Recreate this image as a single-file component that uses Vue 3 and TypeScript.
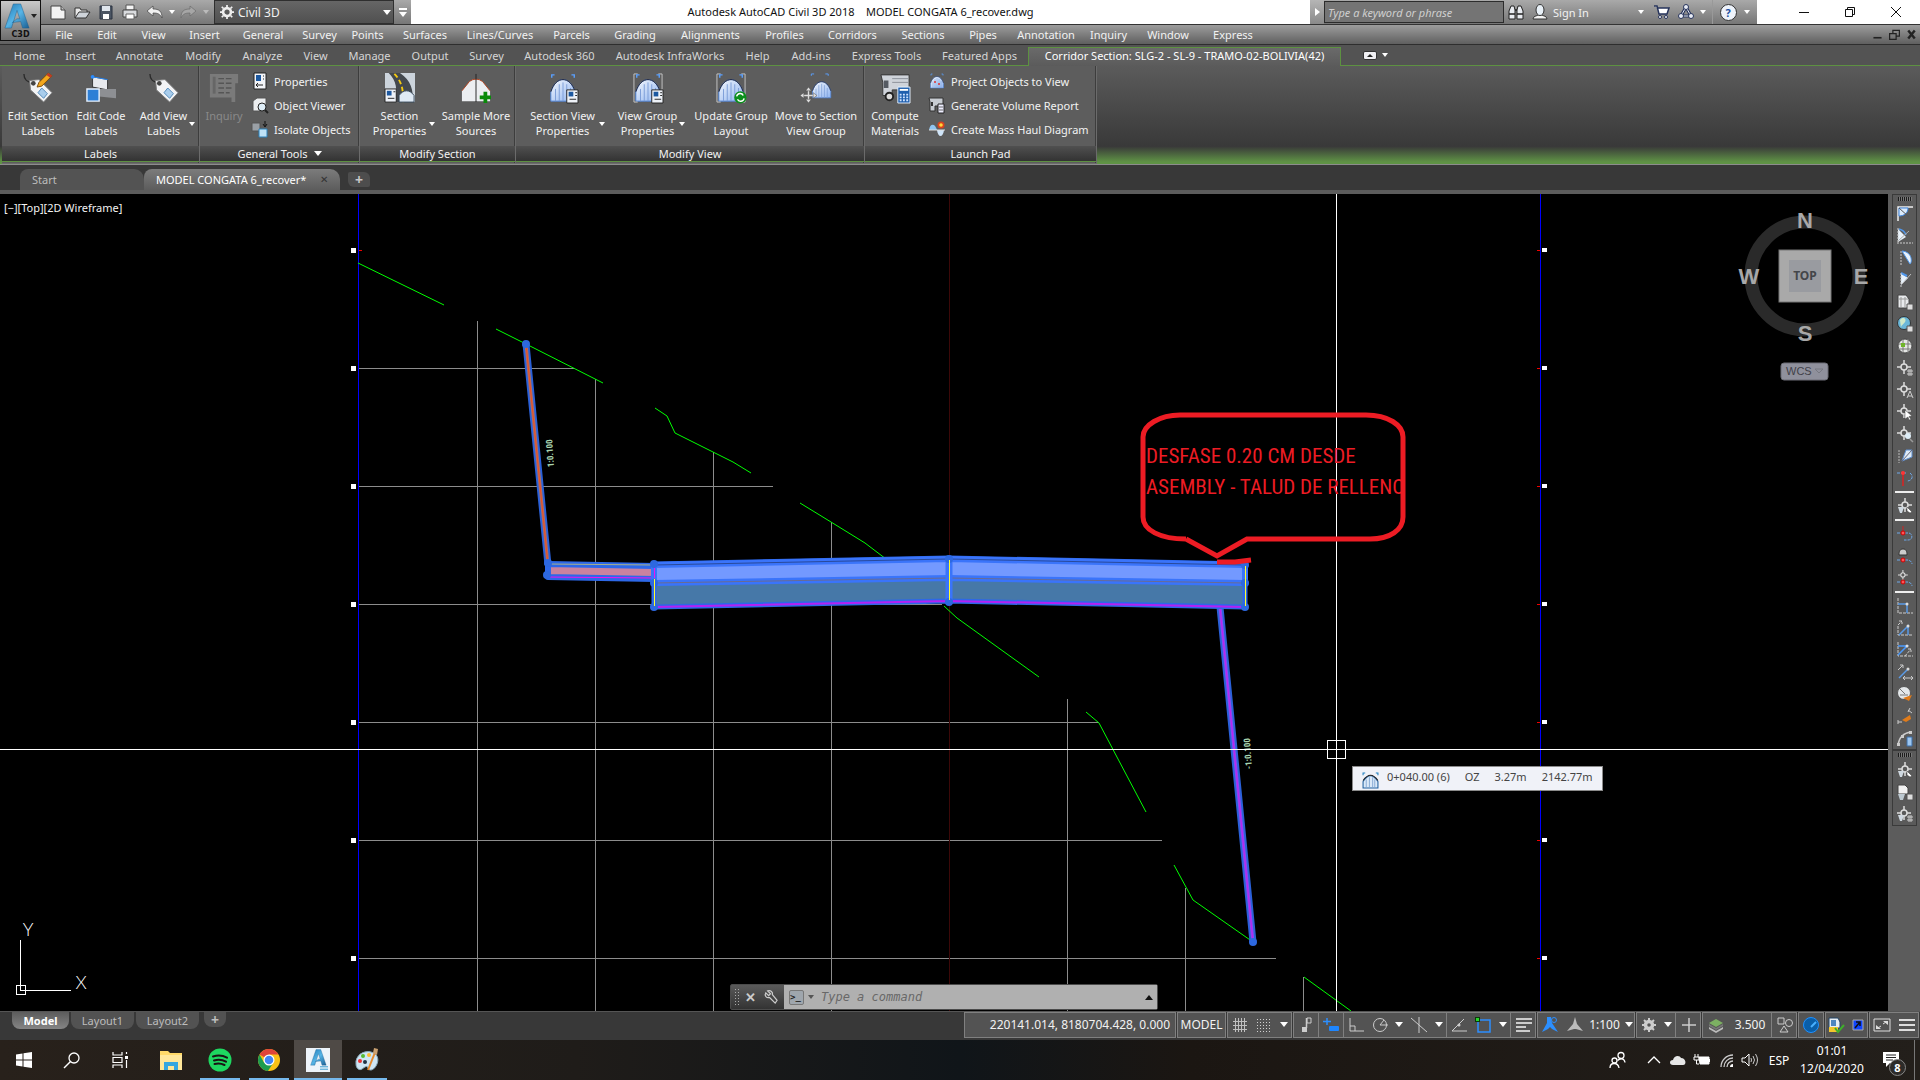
<script setup lang="ts">
import { ref } from 'vue'

interface Sized { text: string; w: number }
interface Big { icon: string; lines: string[]; w: number; caret?: boolean; off?: boolean }
interface Small { icon: string; text: string }
interface Panel { title: string; w: number; big: Big[]; small: Small[]; more?: boolean }
interface Cell { w: number; icon?: string; text?: string; caret?: boolean; line?: boolean; label: string }

const s = (text: string, w: number): Sized => ({ text, w })

const menus: Sized[] = [
  s('File', 42), s('Edit', 44), s('View', 49), s('Insert', 53), s('General', 64), s('Survey', 49), s('Points', 47),
  s('Surfaces', 68), s('Lines/Curves', 82), s('Parcels', 61), s('Grading', 66), s('Alignments', 85), s('Profiles', 63),
  s('Corridors', 73), s('Sections', 68), s('Pipes', 52), s('Annotation', 74), s('Inquiry', 51), s('Window', 68), s('Express', 62),
]
const tabs: Sized[] = [
  s('Home', 53), s('Insert', 49), s('Annotate', 69), s('Modify', 58), s('Analyze', 61), s('View', 45), s('Manage', 63),
  s('Output', 58), s('Survey', 55), s('Autodesk 360', 91), s('Autodesk InfraWorks', 130), s('Help', 45), s('Add-ins', 62),
  s('Express Tools', 89), s('Featured Apps', 97), s('Corridor Section: SLG-2 - SL-9 - TRAMO-02-BOLIVIA(42)', 313),
]
const activeTab = ref(15)

const panels: Panel[] = [
  { title: 'Labels', w: 198, small: [], big: [
    { icon: 'tagEdit', lines: ['Edit Section', 'Labels'], w: 66 },
    { icon: 'codes', lines: ['Edit Code', 'Labels'], w: 60 },
    { icon: 'tag', lines: ['Add View', 'Labels'], w: 68, caret: true } ] },
  { title: 'General Tools', w: 160, more: true, big: [
    { icon: 'inquiry', lines: ['Inquiry'], w: 42, off: true } ], small: [
    { icon: 'props', text: 'Properties' }, { icon: 'viewer', text: 'Object Viewer' }, { icon: 'isolate', text: 'Isolate Objects' } ] },
  { title: 'Modify Section', w: 156, small: [], big: [
    { icon: 'road', lines: ['Section', 'Properties'], w: 76, caret: true },
    { icon: 'sample', lines: ['Sample More', 'Sources'], w: 74 } ] },
  { title: 'Modify View', w: 349, small: [], big: [
    { icon: 'viewProps', lines: ['Section View', 'Properties'], w: 90, caret: true },
    { icon: 'groupProps', lines: ['View Group', 'Properties'], w: 80, caret: true },
    { icon: 'groupUpdate', lines: ['Update Group', 'Layout'], w: 84 },
    { icon: 'groupMove', lines: ['Move to Section', 'View Group'], w: 86 } ] },
  { title: 'Launch Pad', w: 232, big: [
    { icon: 'compute', lines: ['Compute', 'Materials'], w: 54 } ], small: [
    { icon: 'project', text: 'Project Objects to View' }, { icon: 'volume', text: 'Generate Volume Report' },
    { icon: 'haul', text: 'Create Mass Haul Diagram' } ] },
]

const tools: string[][] = [
  ['pieCorner', 'pieLine', 'pieD', 'pieLeft', 'sheet', 'globe', 'grid', 'ptHash', 'ptA', 'ptArrow', 'ptZoom', 'plane', 'redT'],
  ['ptFan'], ['redCurve', 'redBag', 'redPt'],
  ['cornerA', 'cornerB', 'cornerC', 'cornerD', 'protract', 'ortho3', 'arcCalc'],
]
const tools2 = ['ptFan', 'sheetFan', 'fanHash']

const status: Cell[][] = [
  [{ w: 212, text: '220141.014, 8180704.428, 0.000', label: 'Coordinates' }],
  [{ w: 49, text: 'MODEL', label: 'Model space' }],
  [{ w: 25, icon: 'sGrid', label: 'Grid' }, { w: 23, icon: 'sDots', label: 'Snap' }, { w: 17, caret: true, label: 'Snap settings' }],
  [{ w: 25, icon: 'sNote', label: 'Infer' }, { w: 25, icon: 'sDyn', line: true, label: 'Dynamic input' },
    { w: 25, icon: 'sOrtho', line: true, label: 'Ortho' }, { w: 24, icon: 'sPolar', label: 'Polar' }, { w: 14, caret: true, label: 'Polar settings' },
    { w: 25, icon: 'sIso', label: 'Isodraft' }, { w: 15, caret: true, label: 'Isodraft settings' },
    { w: 25, icon: 'sAngle', line: true, label: 'Tracking' }, { w: 24, icon: 'sSquare', label: 'Object snap' }, { w: 15, caret: true, label: 'Object snap settings' },
    { w: 26, icon: 'sLines', line: true, label: 'Lineweight' }],
  [{ w: 25, icon: 'sMan', label: 'Annotation visibility' }, { w: 25, icon: 'sScale', label: 'Auto scale' }, { w: 48, text: '1:100', caret: true, label: 'Annotation scale' }],
  [{ w: 25, icon: 'sGear', label: 'Workspace' }, { w: 14, caret: true, label: 'Workspace list' }, { w: 26, icon: 'sPlus', line: true, label: 'Annotation monitor' }],
  [{ w: 27, icon: 'sLayer', label: 'Level of detail' }, { w: 42, text: '3.500', label: 'Elevation' }, { w: 26, icon: 'sShapes', line: true, label: 'Isolate' }],
  [{ w: 26, icon: 'sCirc', label: 'Graphics performance' }],
  [{ w: 22, icon: 'sDoc', label: 'Units' }, { w: 21, icon: 'sUp', label: 'Shortcuts' }],
  [{ w: 25, icon: 'sFull', label: 'Clean screen' }, { w: 25, icon: 'sMenu', label: 'Customization' }],
]

const apps = [
  { icon: 'folder', label: 'File Explorer', cls: '' }, { icon: 'spotify', label: 'Spotify', cls: 'run' },
  { icon: 'chrome', label: 'Chrome', cls: 'run' }, { icon: 'acad', label: 'Civil 3D', cls: 'run on' },
  { icon: 'paint', label: 'Paint', cls: 'run' },
]

const rows = [250, 368, 486, 604, 722, 840, 958]
const vGrid = [[477, 321], [595, 379], [713, 452], [831, 522], [1067, 699], [1185, 888], [1303, 977]]
const hGrid = [[368, 574], [486, 773], [604, 942], [722, 1099], [840, 1162], [958, 1276]]
const ground = [
  '358,263 444,305', '496,329 526,344 603,383', '655,408 667,416 675,433 713,452 733,462 751,473',
  '800,503 831,522 865,543 886,559', '944,606 957,618 1039,677', '1086,712 1099,723 1146,812',
  '1174,865 1193,900 1253,942', '1304,977 1351,1011',
]
const grips = [[526, 344], [548, 563], [547, 575], [654, 564], [654, 583], [654, 607], [949, 559], [949, 602], [1245, 565], [1245, 583], [1245, 607], [1253, 942]]

const half = '<path d="M3 30V20C6 11 11 7 16 7s10 4 13 13v10z" fill="url(#gb)" stroke="#4b82d8"/><path d="M3 20C6 11 11 7 16 7s10 4 13 13" fill="none" stroke="#223"/><path d="M8 17v13M12 12v18M16 10v20M20 12v18M24 16v14" stroke="#7b9cd6"/>'
const brackets = '<path d="M5 1H1V31H5M27 1h4V31h-4" fill="none" stroke="#c8c8c8"/>'
const corners = '<path d="M4 5V2h3M28 5V2h-3" fill="none" stroke="#5aa0ff" stroke-width="1.5"/>'
const card = '<g transform="translate(20 18)"><path d="M0 0h12v14H0z" fill="#eef2f8" stroke="#222"/><path d="M2 2h5v5H2z" fill="#1c58a0"/><path d="M9 3h2M9 6h2M3 10h7" stroke="#222"/></g>'
const tagBody = '<path d="M1 1c0 6 4 9 9 9" fill="none" stroke="#2b2b2b" stroke-width="1.5"/><path d="M7 8l10-1 14 14-9 10L8 18z" fill="#f2f3f5" stroke="#777"/><circle cx="11" cy="11" r="2.500" fill="#444"/><path d="M20 16l6 6-4 5-6-6z" fill="#a9cdec" stroke="#4e86b8"/>'
const target = '<circle cx="7" cy="7" r="3" fill="none" stroke="#ddd" stroke-width="1.500"/><path d="M7 0v4M7 10v4M0 7h4M10 7h4" stroke="#ddd" stroke-width="1.500"/>'
const fan = '<path d="M1 9h6l-2 6H3z" fill="#cfd8e0"/>'
const hash = '<path d="M10 11h6M10 14h6M12 9v7M14 9v7" stroke="#ccc"/>'
const aMark = '<path d="M1 27L10 1h8l9 26h-7l-2-7-9 1 5-4h3L14 8 8 27z" fill="url(#al)" stroke="#1d5c8a" stroke-width=".5"/>'

const art: Record<string, string> = {
  tagEdit: tagBody + '<path d="M15 15l2-5L27 0l4 3-11 11z" fill="#f5a81c" stroke="#7a4a08"/><path d="M27 0l4 3-2 2-4-3z" fill="#c0392b"/>',
  tag: tagBody,
  codes: '<path d="M7 4l16 3v11L7 15z" fill="#e8eaee" stroke="#333"/><path d="M14 17h18v10l-18-2z" fill="#8d8f93"/><path d="M7 4l16 3" stroke="#2a8cff"/><circle cx="7" cy="4" r="2" fill="#2a8cff"/><path d="M1 17h13v13H1z" fill="#2d7fd6" stroke="#e8f2ff" stroke-width="1.500"/>',
  inquiry: '<path d="M1 1h30v10h-3v20h-4v-5H1z" fill="#7a7a7a"/><path d="M4 4h3v18H4z" fill="#666"/><path d="M10 6h6M18 6h6M10 11h6M18 11h6M10 16h6M18 16h6M10 21h6M18 21h4" stroke="#555" stroke-width="1.500"/>',
  road: '<path d="M0 0h32v31H0z" fill="#ccd4dc"/><path d="M4 0h12c12 8 14 18 14 31H10C14 18 12 8 4 0z" fill="#43484e"/><path d="M10 1c8 8 10 18 9 30" stroke="#f2c811" stroke-width="2" stroke-dasharray="5 3" fill="none"/><path d="M15 31V24c2-3 5-5 8-5s6 2 8 5v7z" fill="#dfeaf5" stroke="#345"/><path d="M0 17h12v14H0z" fill="#eef2f8" stroke="#222"/><path d="M2 19h5v5H2z" fill="#1c58a0"/><path d="M9 20h2M3 27h7" stroke="#222"/>',
  sample: '<path d="M1 30V19L9 9q7-5 14 0l8 10v11z" fill="#eceef1"/><path d="M1 19L9 9q7-5 14 0l8 10" fill="none" stroke="#b1401c"/><path d="M16 1v30" stroke="#222"/><path d="M26 20v12M20 26h12" stroke="#0a8a0a" stroke-width="4"/>',
  viewProps: half + corners + card,
  groupProps: half + brackets + corners + card,
  groupUpdate: half + brackets + corners + '<circle cx="26" cy="26" r="6.500" fill="#0c8f1c"/><path d="M22 25c1-4 6-4 7-1M30 27c-1 4-6 4-7 1" fill="none" stroke="#fff" stroke-width="1.500"/>',
  groupMove: '<g transform="translate(10 4) scale(.75)">' + half + '</g><path d="M11 3V1h3M29 3V1h-3" fill="none" stroke="#5aa0ff"/><path d="M8 16v15M0 24h16" stroke="#ddd" stroke-width="1.500"/><path d="M5 19l3-4 3 4zM5 28l3 4 3-4zM3 21l-4 3 4 3zM13 21l4 3-4 3z" fill="#ddd" stroke="#444" stroke-width=".5"/>',
  compute: '<path d="M1 2h30v16H13v6H3V10z" fill="#cfd3da" stroke="#333"/><path d="M13 6h17M13 10h17" stroke="#8a8f98"/><path d="M4 8h5v8H4z" fill="#555a62"/><circle cx="10" cy="25" r="4" fill="#ddd" stroke="#222" stroke-width="2"/><path d="M19 15h13v17H19z" fill="#1f5fae" stroke="#e8f2ff"/><path d="M21 18h9" stroke="#fff" stroke-width="2"/><path d="M21 23h9M21 26h9M21 29h9" stroke="#cfe3ff" stroke-dasharray="2 1.500" stroke-width="2"/>',
  props: '<path d="M2 0h12v16H2z" fill="#f2f4f8" stroke="#222"/><path d="M4 2h5v6H4z" fill="#1c58a0"/><path d="M11 3h1M11 6h1M4 12h7M4 12l2-2M4 12l2 2" stroke="#222"/>',
  viewer: '<path d="M1 4l4-3h9v9l-3 4H1z" fill="#eceef0" stroke="#555"/><circle cx="10" cy="10" r="4" fill="#dfeef8" stroke="#222"/><path d="M13 13l3 3" stroke="#222" stroke-width="2"/>',
  isolate: '<path d="M0 2h8v8H0z" fill="#9aa0a6" stroke="#555"/><path d="M7 8h8v8H7z" fill="#bfe2f7" stroke="#2c83bd"/><path d="M13 0v5M11 3l2 3 2-3" stroke="#111" fill="none"/>',
  project: '<g transform="scale(.5)">' + half + corners + '</g><circle cx="6" cy="9" r="1" fill="#e03030"/><circle cx="10" cy="11" r="1" fill="#e03030"/>',
  volume: '<path d="M0 1h14v8H6v5H1V5z" fill="#c8ccd2" stroke="#333"/><path d="M2 5h2v4H2z" fill="#333"/><path d="M9 7h6v9H9z" fill="#eef" stroke="#222"/><path d="M10 10h4M10 13h4" stroke="#666"/>',
  haul: '<path d="M0 9c1-7 6-7 8 0z" fill="#8fc4f0"/><path d="M8 9c1 8 6 8 7 0z" fill="#cfe4f8"/><path d="M0 9h16" stroke="#ddd"/><circle cx="12" cy="4" r="3.500" fill="#d8431f"/><circle cx="12" cy="4" r="1.800" fill="#ffd83a"/>',
  new: '<path d="M1 2h10l4 4v9H1z" fill="#f3f3f3" stroke="#444"/><path d="M11 2v4h4" fill="#bbb" stroke="#444"/>',
  open: '<path d="M1 14V4h5l1 2h6v3" fill="#e8e8e8" stroke="#333"/><path d="M1 14l4-6h11l-4 6z" fill="#cfd4da" stroke="#333"/>',
  save: '<path d="M2 2h12v13H2z" fill="#4b5563" stroke="#2b3340"/><path d="M4 2h8v5H4z" fill="#dfe5ec"/><path d="M5 10h6v5H5z" fill="#fff"/>',
  print: '<path d="M4 1h8v5H4z" fill="#f5f5f5" stroke="#555"/><path d="M1 6h14v7H1z" fill="#d9dbde" stroke="#444"/><path d="M4 10h8v5H4z" fill="#fff" stroke="#666"/>',
  undo: '<path d="M1 7l6-5v3c6 0 9 2 9 9-2-4-4-5-9-5v3z" fill="#f0f0f0" stroke="#444" stroke-width=".7"/>',
  redo: '<path d="M15 7l-6-5v3c-6 0-9 2-9 9 2-4 4-5 9-5v3z" fill="#a6a6a6" stroke="#6c6c6c" stroke-width=".7"/>',
  gear: '<circle cx="8" cy="8" r="4.500" fill="none" stroke="#eee" stroke-width="3"/><path d="M8 0v3M8 13v3M0 8h3M13 8h3M2 2l2 2M12 12l2 2M14 2l-2 2M2 14l2-2" stroke="#eee" stroke-width="2"/>',
  bino: '<path d="M1 15V7l2-5h3l1 4v9zM9 15V6l1-4h3l2 5v8z" fill="#e9ecf1" stroke="#222"/><path d="M1 10h6M9 10h6M7 6h2" stroke="#222" stroke-width="1.500"/>',
  user: '<path d="M1 15c0-3 4-3 5-4h4c1 1 5 1 5 4z" fill="#f3f3f3" stroke="#333"/><ellipse cx="8" cy="6" rx="4" ry="5.500" fill="#e8f0f7" stroke="#333"/>',
  cart: '<path d="M0 2h3l2 8h8l2-6H4" fill="#fff" stroke="#27345c" stroke-width="1.500"/><circle cx="6" cy="13" r="1.500" fill="#fff" stroke="#27345c"/><circle cx="12" cy="13" r="1.500" fill="#fff" stroke="#27345c"/>',
  tri: '<path d="M8 3l5 9H3z" fill="none" stroke="#27345c" stroke-width="3" stroke-linejoin="round"/><path d="M8 3l5 9H3z" fill="none" stroke="#e8ecf5" stroke-linejoin="round"/><g fill="#e8ecf5" stroke="#27345c"><circle cx="8" cy="3" r="2.500"/><circle cx="3" cy="12" r="2.500"/><circle cx="13" cy="12" r="2.500"/></g>',
  winMin: '<path d="M3 8.500h10" stroke="#111"/>',
  winMax: '<path d="M3.500 5.500h7v7h-7zM5.500 5v-1.500h7v7H11" fill="none" stroke="#111"/>',
  winX: '<path d="M3 3l10 10M13 3L3 13" stroke="#111"/>',
  mMin: '<path d="M3 12h10" stroke="#222" stroke-width="2"/>',
  mMax: '<path d="M2 7h8v7H2zM6 7V3h8v7h-4" fill="none" stroke="#222" stroke-width="1.500"/>',
  mX: '<path d="M4 3l8 10M12 3L4 13" stroke="#222" stroke-width="3"/>',
  wrench: '<path d="M3 3l3 3 2-2-3-3c3-1 6 1 5 4l5 6-2 3-6-6C4 9 1 6 3 3z" fill="none" stroke="#ccc" stroke-width="1.300"/>',
  section: '<path d="M1 15V9q7-11 14 0v6z" fill="#dbe9f8" stroke="#2060a0"/><path d="M1 8q7-10 14 0" fill="none" stroke="#222"/><path d="M4 7v7M7 5v9M10 5v9M12 7v7" stroke="#8fb0d8"/><path d="M1 3V1h2M15 3V1h-2" fill="none" stroke="#2080c0"/>',
  pieCorner: '<path d="M1 15V1h15" fill="none" stroke="#eee" stroke-width="1.500"/><path d="M2 2h9c0 5-4 8-9 8z" fill="#dcebfb" stroke="#3f86e0"/><path d="M2 2l10 9" stroke="#555"/>',
  pieLine: '<path d="M1 1l8 8-8 5z" fill="#e8f2fb"/><path d="M2 1c4 1 6 3 7 6" fill="none" stroke="#4f96ea" stroke-width="1.500"/><path d="M12 3L1 13" stroke="#aaa"/><path d="M0 15h16M1 0v14" stroke="#ccc" stroke-dasharray="2 1"/>',
  pieD: '<path d="M5 1c11 1 10 12 8 13z" fill="#e8f2fb" stroke="#4f96ea"/><path d="M4 1v14" stroke="#ccc" stroke-dasharray="2 1"/>',
  pieLeft: '<path d="M4 1l7 5-7 7z" fill="#e8f2fb"/><path d="M4 1l6 3" stroke="#4f96ea" stroke-width="2"/><path d="M14 2L5 12" stroke="#bbb"/><path d="M4 1v15" stroke="#ccc" stroke-dasharray="2 1"/>',
  sheet: '<path d="M1 1h8l3 4v9H1z" fill="#e8eaec" stroke="#444"/><path d="M4 3v10M8 3v10M2 5h9" stroke="#999"/><path d="M10 10h6v6h-6z" fill="#ddd" stroke="#555"/>',
  globe: '<circle cx="7" cy="7" r="6.500" fill="#6bb7d8" stroke="#333"/><path d="M3 4c3-4 7-1 5 2S4 9 4 12z" fill="#cfe9c8"/><path d="M10 10h6v6h-6z" fill="#ddd" stroke="#555"/>',
  grid: '<circle cx="8" cy="8" r="7" fill="#e4e6e4" stroke="#444"/><path d="M1 6h14M1 11h14M6 1v14M11 1v14" stroke="#777"/><path d="M4 5h4v4H4z" fill="#6fb52a"/>',
  ptHash: target + hash,
  ptA: target + '<path d="M10 16l3-7 3 7M11 14h4" fill="none" stroke="#ccc"/>',
  ptArrow: target + '<path d="M8 6l7 6-3 .5 2 3-2 .5-1-3-3 2z" fill="#fff" stroke="#444" stroke-width=".5"/>',
  ptZoom: target + '<circle cx="11" cy="10" r="3" fill="#dcebf5"/><path d="M13 13l3 3" stroke="#999" stroke-width="1.500"/>',
  plane: '<path d="M2 2v13" stroke="#bbb" stroke-dasharray="2 1"/><path d="M15 2v7L5 13 9 2z" fill="#dfeaf5" stroke="#5f8fd0"/><path d="M15 2L5 13" stroke="#667"/>',
  redT: '<path d="M0 3h6M6 3h3M13 3c4 3 2 8-3 8" stroke="#6fa8e8" fill="none" stroke-dasharray="3 1"/><path d="M6 3v13" stroke="#d22" stroke-width="1.500"/><circle cx="6" cy="3" r="2" fill="#f33"/>',
  ptFan: '<g transform="translate(1 0)">' + target + '</g>' + fan + '<path d="M10 9l5 5-2 1-3-2z" fill="#fff" stroke="#333" stroke-width=".5"/>',
  redCurve: '<path d="M0 7h12c4 1 4 7-1 7H7" stroke="#6fa8e8" fill="none" stroke-dasharray="3 1"/><path d="M6 0v6" stroke="#c22"/><circle cx="6" cy="7" r="2" fill="#f55" stroke="#c00"/>',
  redBag: '<path d="M2 7c0-4 1-6 4-6s4 2 4 6z" fill="#ccc" stroke="#333"/><path d="M0 12h10c3 0 5 2 5 4" stroke="#6fa8e8" fill="none" stroke-dasharray="3 1"/><circle cx="6" cy="12" r="2" fill="#f55" stroke="#c00"/>',
  redPt: '<g transform="translate(1 0) scale(.7)">' + target + '</g><path d="M0 12h10c3 0 5 2 5 4" stroke="#6fa8e8" fill="none" stroke-dasharray="3 1"/><circle cx="6" cy="12" r="2" fill="#f55" stroke="#c00"/>',
  cornerA: '<path d="M1 0v15h15" fill="none" stroke="#ccc" stroke-dasharray="3 1"/><path d="M1 6h9v9" fill="none" stroke="#5a9be8" stroke-width="1.500"/><circle cx="10" cy="6" r="1.500" fill="#ddd"/>',
  cornerB: '<path d="M1 5l4-4M2 1h3v3M1 6v9h15" fill="none" stroke="#ccc" stroke-dasharray="3 1"/><path d="M2 15l9-9v9" fill="none" stroke="#5a9be8" stroke-width="1.500"/><circle cx="11" cy="6" r="1.500" fill="#ddd"/>',
  cornerC: '<path d="M1 0v14h15M8 14l6-7M11 7h3v3" fill="none" stroke="#ccc" stroke-dasharray="3 1"/><path d="M1 4h9L1 13" fill="none" stroke="#4a9bff" stroke-width="1.500"/><circle cx="10" cy="4" r="1.500" fill="#ddd"/>',
  cornerD: '<path d="M1 6l5-5M3 1h3v3M6 14h10M8 12l-2 2 2 2M14 12l2 2-2 2" fill="none" stroke="#ccc"/><path d="M2 14l9-9" stroke="#5a9be8" stroke-width="1.500"/><circle cx="11" cy="5" r="1.500" fill="#ddd"/>',
  protract: '<circle cx="7" cy="7" r="6.500" fill="#e4e8ea" stroke="#555"/><path d="M3 3l5 5M3 9h8" stroke="#777"/><path d="M6 12l9-3-3 6z" fill="#e07b1a"/>',
  ortho3: '<path d="M1 14h4M1 12v4M11 2l4 3M13 0l-2 4" stroke="#ccc"/><path d="M5 12l8-5 1 4-5 3z" fill="#e07b1a"/>',
  arcCalc: '<path d="M1 15C2 8 6 3 14 2" fill="none" stroke="#ccc" stroke-width="1.500"/><path d="M0 13h3v3H0zM4 5h3v3H4zM12 1h3v3h-3z" fill="#ccc"/><path d="M10 7h5v9h-5z" fill="#9cc6f0" stroke="#3c6ea8"/>',
  sheetFan: '<path d="M1 1h7l3 3v6H1z" fill="#f0f0f0" stroke="#444"/><path d="M1 10h7l-2 6H3z" fill="#bcc8d0"/><path d="M10 10h6v6h-6z" fill="#ddd" stroke="#555"/>',
  fanHash: target + fan + hash,
  sGrid: '<path d="M3.500 1v14M6.500 1v14M9.500 1v14M12.500 1v14M1 4.500h14M1 8.500h14M1 12.500h14" stroke="#c0c0c0"/>',
  sDots: '<path d="M1 2.500h14M1 5.500h14M1 8.500h14M1 11.500h14M1 14.500h14" stroke="#d0d0d0" stroke-dasharray="1 2"/>',
  sNote: '<path d="M9 1h4v5H9z" fill="none" stroke="#ccc"/><path d="M8.500 1v10" stroke="#ccc" stroke-width="1.500"/><path d="M4 10h5v5H4z" fill="#ccc"/>',
  sDyn: '<path d="M4 1v7M0 4.500h8" stroke="#2c8fff" stroke-width="1.500"/><rect x="6" y="9" width="10" height="5" rx="1" fill="#1e86ff"/>',
  sOrtho: '<path d="M2 1v13h14M2 9h5v5" fill="none" stroke="#ccc"/>',
  sPolar: '<circle cx="8" cy="8" r="6.500" fill="none" stroke="#ccc"/><path d="M8 8h8M8 8l4-5" stroke="#ccc"/>',
  sIso: '<path d="M8 0v16M0 1l16 14" stroke="#ccc"/>',
  sAngle: '<path d="M16 14H1L13 2" fill="none" stroke="#ccc"/><circle cx="8" cy="8" r="1.500" fill="#ccc"/>',
  sSquare: '<path d="M3 3h12v12H3z" fill="none" stroke="#2c8fff" stroke-width="1.500"/><path d="M0 0h5v5H0z" fill="#0a3a0a"/><path d="M1 1h3v3H1z" fill="#2bd42b"/>',
  sLines: '<path d="M0 2h16M0 6h16M0 10h10M0 14h14" stroke="#ccc" stroke-width="2"/>',
  sMan: '<path d="M5 0h4l1 6 6 9-6-3-2-2-2 2-6 3 5-9z" fill="#2c8fff"/><circle cx="12" cy="3" r="2.500" fill="#535353" stroke="#2c8fff"/>',
  sScale: '<path d="M8 0l2 7 6 7-7-2H7l-7 2 6-7z" fill="#bbb"/>',
  sGear: '<circle cx="8" cy="8" r="3.500" fill="none" stroke="#ccc" stroke-width="3.500"/><path d="M8 1v2M8 13v2M1 8h2M13 8h2M3 3l2 2M11 11l2 2M13 3l-2 2M3 13l2-2" stroke="#ccc" stroke-width="2"/>',
  sPlus: '<path d="M8 1v14M1 8h14" stroke="#ccc" stroke-width="1.500"/>',
  sLayer: '<path d="M1 10l7 4 7-4v2l-7 4-7-4z" fill="#bbb"/><path d="M1 7l7 4 7-4v2l-7 4-7-4z" fill="#777"/><path d="M8 2l7 4-7 4-7-4z" fill="#7cb062"/>',
  sShapes: '<path d="M1 1h6v6H1zM7 9l4 6H3z" fill="none" stroke="#ccc"/><circle cx="12" cy="6" r="3.500" fill="none" stroke="#ccc"/>',
  sCirc: '<circle cx="8" cy="8" r="7.500" fill="#0a5ea8" stroke="#1e90ff"/><path d="M8 10l5-5" stroke="#49b0ff" stroke-width="2"/>',
  sDoc: '<path d="M1 1h9l2 4v6H1z" fill="#e8eef4" stroke="#246"/><path d="M3 3h5v6H3z" fill="#4f86c0"/><path d="M1 10h9v5H1z" fill="#f2c62c"/><path d="M7 11l3 4 6-7" fill="none" stroke="#3fae2a" stroke-width="2"/>',
  sUp: '<path d="M3 3h10v10H3z" fill="#1044ff" stroke="#aaa"/><path d="M5 11l5-6M6 5h4v4" fill="none" stroke="#111" stroke-width="1.500"/>',
  sFull: '<path d="M0 2h16v12H0z" fill="none" stroke="#ddd"/><path d="M9 4h5v4zM2 8v4h5z" fill="#ddd"/><path d="M9 7l3-2M4 11l3-2" stroke="#ddd"/>',
  sMenu: '<path d="M0 3h16M0 8h16M0 13h16" stroke="#ddd" stroke-width="2"/>',
  win: '<path d="M0 2.500l6.500-1v6H0zM7.500 1.300L16 0v7.500H7.500zM0 8.500h6.500v6L0 13.500zM7.500 8.500H16V16l-8.500-1.300z" fill="#fff"/>',
  search: '<circle cx="10" cy="6" r="5" fill="none" stroke="#fff" stroke-width="1.300"/><path d="M6.500 9.500L0 16" stroke="#fff" stroke-width="1.500"/>',
  task: '<path d="M1 0v3h9V0M1 5.500h9v5H1zM1 16v-3h9v3M14.500 0v2M14.500 8v8" fill="none" stroke="#fff" stroke-width="1.200"/><path d="M13 4h3v3h-3z" fill="#fff"/>',
  folder: '<path d="M1 3h8l2 2h12v17H1z" fill="#ffd968"/><path d="M1 7h22v15H1z" fill="#ffe79a"/><path d="M5 22v-8h14v8h-4v-4H9v4z" fill="#35a7e0"/>',
  spotify: '<circle cx="12" cy="12" r="11.500" fill="#1ed760"/><path d="M5 8.500c5-1.500 10-1 14 1.200M6 12.500c4-1.200 8.500-.8 12 1.200M6.500 16c3.500-1 7-.6 10 1" fill="none" stroke="#191414" stroke-width="2" stroke-linecap="round"/>',
  chrome: '<circle cx="12" cy="12" r="11" fill="#fbc116"/><path d="M12 12L2.500 6.500A11 11 0 0 1 21.500 6.500H12z" fill="#e0443a"/><path d="M2.500 6.500A11 11 0 0 0 11 23l5.500-8.500H7z" fill="#1c9c50"/><circle cx="12" cy="12" r="5.500" fill="#fff"/><circle cx="12" cy="12" r="4.300" fill="#4285f4"/>',
  acad: '<path d="M0 0h24v24H0z" fill="#eef4fa"/><g transform="translate(4 1) scale(.6)">' + aMark + '</g><path d="M14 18h8v4h-8z" fill="#6fb6dc"/><path d="M14 20h8" stroke="#fff"/>',
  paint: '<path d="M1 16C0 8 8 2 16 4c8 2 8 9 5 14-3 5-7 5-8 2s-3-1-6 1-6-1-6-5z" fill="#cfe6f5" stroke="#8ab"/><circle cx="5" cy="13" r="2" fill="#e33"/><circle cx="8" cy="8" r="2" fill="#5b3"/><circle cx="14" cy="7" r="2" fill="#fb3"/><circle cx="10" cy="14" r="2" fill="#234"/><path d="M21 2l-8 20" stroke="#e58a2e" stroke-width="2"/><path d="M19 0l4 1-1 6-4-2z" fill="#c9a070"/>',
  people: '<circle cx="11" cy="3.500" r="3" fill="none" stroke="#fff" stroke-width="1.300"/><circle cx="4.500" cy="8.500" r="2.500" fill="none" stroke="#fff" stroke-width="1.300"/><path d="M7.500 8.500c3-3 7-2 7.500 2M0 16c0-6 8-6 9 0" fill="none" stroke="#fff" stroke-width="1.300"/>',
  up: '<path d="M2 11l6-6 6 6" fill="none" stroke="#fff" stroke-width="1.300"/>',
  cloud: '<path d="M3 13c-4 0-4-5 0-5 1-5 7-5 8-2 5 0 6 7 2 7z" fill="#e6e6e6"/>',
  batt: '<path d="M5 5h10v7H6z" fill="#fff" stroke="#fff"/><path d="M15.500 7v3M1 2v3M4 2v3M0 5h5v3H0zM2.500 8v4H5" fill="none" stroke="#fff"/>',
  wifi: '<path d="M3 15A12 12 0 0 1 15 3M6 15a9 9 0 0 1 9-9M9 15a6 6 0 0 1 6-6" fill="none" stroke="#ccc" stroke-width="1.300"/><path d="M12 15a3 3 0 0 1 3-3v3z" fill="#fff"/>',
  vol: '<path d="M0 6h3l4-4v12l-4-4H0z" fill="none" stroke="#fff"/><path d="M9 6q1 2 0 4M11 4q3 4 0 8M13.500 2q4 6 0 12" fill="none" stroke="#ccc"/>',
  note: '<path d="M0 0h16v11H7l-4 4v-4H0z" fill="#fff"/><path d="M3 3h10M3 5.500h10M3 8h7" stroke="#222"/>',
}

const workspace = ref('Civil 3D')
const keyword = ref('')
const command = ref('')
</script>

<template>
  <div class="app">
    <svg class="defs" width="0" height="0" aria-hidden="true">
      <defs>
        <linearGradient id="gb" x1="0" y1="0" x2="1" y2="1"><stop offset="0" stop-color="#f4f7fc" /><stop offset="1" stop-color="#8fb4f0" /></linearGradient>
        <linearGradient id="al" x1="0" y1="0" x2="1" y2="1"><stop offset="0" stop-color="#1f78b4" /><stop offset=".5" stop-color="#56b4e6" /><stop offset="1" stop-color="#1b5f93" /></linearGradient>
      </defs>
    </svg>

    <header class="top">
      <button class="appbtn" aria-label="Application menu">
        <svg viewBox="0 0 28 28" width="26" height="28" v-html="aMark"></svg>
        <i class="caret dark"></i>
        <span>C3D</span>
      </button>
      <div class="title">
        <div class="qat">
          <button v-for="n in ['new', 'open', 'save', 'print', 'undo']" :key="n" :aria-label="n"><svg viewBox="0 0 16 16" width="16" height="16" v-html="art[n]"></svg></button>
          <button class="thin" aria-label="Undo list"><i class="caret"></i></button>
          <button aria-label="redo"><svg viewBox="0 0 16 16" width="16" height="16" v-html="art.redo"></svg></button>
          <button class="thin" aria-label="Redo list"><i class="caret dim"></i></button>
          <label class="ws">
            <svg viewBox="0 0 16 16" width="14" height="14" v-html="art.gear"></svg>
            <select v-model="workspace" aria-label="Workspace"><option>Civil 3D</option></select>
            <i class="caret wide"></i>
          </label>
          <button class="end" aria-label="Customize"><b></b><i class="caret wide"></i></button>
        </div>
        <h1>Autodesk AutoCAD Civil 3D 2018 &nbsp;&nbsp; MODEL CONGATA 6_recover.dwg</h1>
        <div class="info">
          <button class="go" aria-label="Collapse search"><i class="right"></i></button>
          <input v-model="keyword" placeholder="Type a keyword or phrase" aria-label="Search" />
          <button aria-label="Find"><svg viewBox="0 0 16 16" width="16" height="16" v-html="art.bino"></svg></button>
          <button class="sign"><svg viewBox="0 0 16 16" width="16" height="16" v-html="art.user"></svg><span>Sign In</span><i class="caret"></i></button>
          <button aria-label="Store"><svg viewBox="0 0 16 16" width="16" height="16" v-html="art.cart"></svg></button>
          <button aria-label="Apps"><svg viewBox="0 0 16 16" width="16" height="16" v-html="art.tri"></svg></button>
          <button class="thin" aria-label="Apps list"><i class="caret"></i></button>
          <button class="help" aria-label="Help"><b>?</b><i class="caret"></i></button>
        </div>
        <div class="win">
          <button v-for="n in ['winMin', 'winMax', 'winX']" :key="n" :aria-label="n"><svg viewBox="0 0 16 16" width="16" height="16" v-html="art[n]"></svg></button>
        </div>
      </div>
      <nav class="menu">
        <button v-for="m in menus" :key="m.text" :style="{ width: m.w + 'px' }">{{ m.text }}</button>
        <div class="mdi">
          <button v-for="n in ['mMin', 'mMax', 'mX']" :key="n" :aria-label="n"><svg viewBox="0 0 16 16" width="13" height="13" v-html="art[n]"></svg></button>
        </div>
      </nav>
      <nav class="tabs">
        <button v-for="(t, i) in tabs" :key="t.text + i" :class="{ on: i === activeTab }" :style="{ width: t.w + 'px' }" @click="activeTab = i">{{ t.text }}</button>
        <button class="fold" aria-label="Minimize ribbon"><b><i></i></b><i class="caret"></i></button>
      </nav>
    </header>

    <section class="ribbon">
      <div v-for="p in panels" :key="p.title" class="panel" :style="{ width: p.w + 'px' }">
        <div class="body">
          <button v-for="b in p.big" :key="b.icon" class="big" :class="{ off: b.off, drop: b.caret }" :style="{ width: b.w + 'px' }">
            <svg viewBox="0 0 32 32" width="30" height="32" v-html="art[b.icon]"></svg>
            <span v-for="l in b.lines" :key="l">{{ l }}</span>
            <i v-if="b.caret" class="caret"></i>
          </button>
          <div v-if="p.small.length" class="smalls">
            <button v-for="k in p.small" :key="k.icon"><svg viewBox="0 0 16 16" width="16" height="16" v-html="art[k.icon]"></svg>{{ k.text }}</button>
          </div>
        </div>
        <div class="ptitle">{{ p.title }}<i v-if="p.more" class="caret wide"></i></div>
      </div>
    </section>

    <div class="files">
      <button class="ftab start">Start</button>
      <button class="ftab on">MODEL CONGATA 6_recover*<span>✕</span></button>
      <button class="fplus" aria-label="New drawing">+</button>
    </div>

    <main class="work">
      <div class="canvas">
        <svg class="draw" viewBox="0 194 1888 817" preserveAspectRatio="xMidYMid slice">
          <g stroke="#8c8c8c" shape-rendering="crispEdges">
            <line v-for="v in vGrid" :key="'v' + v[0]" :x1="v[0]" :x2="v[0]" :y1="v[1]" y2="1011" />
            <line v-for="h in hGrid" :key="'h' + h[0]" x1="358" :x2="h[1]" :y1="h[0]" :y2="h[0]" />
            <path d="M358 194V1011M1540 194V1011" stroke="#0000ff" />
            <path d="M949 194V1011" stroke="#3c0808" />
            <path d="M1537 250h3M1537 368h3M1537 486h3M1537 604h3M1537 722h3M1537 840h3M1537 958h3M359 250h3" stroke="#f00000" />
          </g>
          <g v-for="r in rows" :key="r" fill="#fff">
            <rect x="351" :y="r - 2" width="5" height="5" />
            <rect x="1542" :y="r - 2" width="5" height="4" />
          </g>
          <g fill="none" stroke="#00ff00">
            <polyline v-for="g in ground" :key="g" :points="g" />
          </g>

          <g stroke-linejoin="round">
            <path d="M526 344L548 565M1220 607L1253 942" stroke="#2a60d8" stroke-width="7" />
            <path d="M526 344L548 565" stroke="#b0705f" stroke-width="3" />
            <path d="M526 344L548 565" stroke="#f04a20" />
            <path d="M1220 607L1253 942" stroke="#8a4cf0" stroke-width="3" />
            <path d="M1220 607L1253 942" stroke="#c020f0" />
            <path d="M548 564L654 566V579L548 577z" fill="#c9829f" stroke="#2d68e8" stroke-width="6" />
            <path d="M548 564L654 565" stroke="#a8b08a" />
            <path d="M548 577L654 578V565" fill="none" stroke="#f010f0" />
            <path d="M654 564L949 558 1245 564V607L949 601 654 607z" fill="#4678a8" stroke="#2d68e8" stroke-width="5" />
            <path d="M654 565L949 559 1245 565V583L949 578 654 583z" fill="#7399ff" stroke="#3a74fa" stroke-width="6" />
            <path d="M654 565L949 559 1245 565" fill="none" stroke="#2a4a9a" />
            <path d="M654 583L949 578 1245 583" fill="none" stroke="#6b6c90" />
            <path d="M654 607L949 601 1245 607" fill="none" stroke="#b420f4" stroke-width="2" />
            <path d="M949 558V602" stroke="#3a74fa" stroke-width="7" />
            <path d="M654 566V578" stroke="#f010f0" shape-rendering="crispEdges" />
          </g>
          <circle v-for="g in grips" :key="g.join()" :cx="g[0]" :cy="g[1]" r="4" fill="#2d68e0" />
          <path d="M654 579V606M1245 566V606M949 560V600" stroke="#ffff30" shape-rendering="crispEdges" />
          <g class="slope">
            <text transform="translate(554 467) rotate(-94)">1:0.100</text>
            <text transform="translate(1252 769) rotate(-94)">-1:0.100</text>
          </g>

          <path d="M0 749H1888M1336 194V1011" stroke="#fff" shape-rendering="crispEdges" />
          <path d="M1327 740h18v18h-18z" fill="none" stroke="#fff" shape-rendering="crispEdges" />

          <path d="M1186 539C1160 539 1143 530 1143 517V437C1143 425 1160 415 1180 415H1366C1388 415 1403 425 1403 437V517C1403 530 1390 539 1370 539H1247L1217 556 1186 539" fill="none" stroke="#ed1c24" stroke-width="5" />
          <path d="M1217 562H1235L1251 560" fill="none" stroke="#ed1c24" stroke-width="5" />
          <g class="callout">
            <text x="1146" y="463">DESFASE 0.20 CM DESDE</text>
            <text x="1146" y="494">ASEMBLY - TALUD DE RELLENO</text>
          </g>

          <g stroke="#fff" fill="none" shape-rendering="crispEdges">
            <path d="M20 940V990H71M16 985h9v9h-9z" />
          </g>
          <g class="ucs"><text x="28" y="936">Y</text><text x="81" y="989">X</text></g>

          <circle cx="1805" cy="276" r="54" fill="none" stroke="#2a2a2a" stroke-width="13" />
          <g class="compass">
            <text x="1805" y="228">N</text><text x="1805" y="341">S</text><text x="1749" y="284">W</text><text x="1861" y="284">E</text>
          </g>
          <rect x="1779" y="250" width="52" height="52" fill="#a9a9a9" stroke="#777" />
          <rect x="1789" y="260" width="32" height="32" fill="#999ba0" />
          <text class="cube" x="1805" y="280">TOP</text>
          <rect x="1781" y="363" width="47" height="17" rx="3" fill="#8f909c" stroke="#6c6d76" />
          <text class="wcs" x="1786" y="375">WCS</text>
          <path d="M1815 369h8l-4 4z" fill="none" stroke="#777881" />
        </svg>
        <div class="viewlabel">[−][Top][2D Wireframe]</div>
        <div class="tip">
          <svg viewBox="0 0 16 16" width="17" height="17" v-html="art.section"></svg>
          <span>0+040.00 (6)</span><span>OZ</span><span>3.27m</span><span>2142.77m</span>
        </div>
        <div class="cmd">
          <i class="grip"></i>
          <button aria-label="Close">✕</button>
          <button aria-label="Customize"><svg viewBox="0 0 16 16" width="15" height="15" v-html="art.wrench"></svg></button>
          <label><b>&gt;_</b><i class="caret grey"></i><input v-model="command" placeholder="Type a command" aria-label="Command" /><i class="upc"></i></label>
        </div>
      </div>
      <aside class="side">
        <div class="pal">
          <i class="dots"></i>
          <template v-for="(g, gi) in tools" :key="gi">
            <hr v-if="gi > 0" />
            <button v-for="t in g" :key="t" :aria-label="t"><svg viewBox="0 0 16 16" width="16" height="16" v-html="art[t]"></svg></button>
          </template>
        </div>
        <div class="pal">
          <i class="dots"></i>
          <button v-for="t in tools2" :key="t" :aria-label="t"><svg viewBox="0 0 16 16" width="16" height="16" v-html="art[t]"></svg></button>
        </div>
      </aside>
    </main>

    <footer class="status">
      <div class="layouts">
        <button class="on">Model</button><button>Layout1</button><button>Layout2</button><button class="add" aria-label="New layout">+</button>
      </div>
      <div class="cells">
        <div v-for="(g, gi) in status" :key="gi" class="group">
          <button v-for="c in g" :key="c.label" :class="{ line: c.line, coord: c.w > 200 }" :aria-label="c.label" :style="{ width: c.w + 'px' }">
            <svg v-if="c.icon" viewBox="0 0 16 16" width="16" height="16" v-html="art[c.icon]"></svg>
            <span v-if="c.text">{{ c.text }}</span>
            <i v-if="c.caret" class="caret wide"></i>
          </button>
        </div>
      </div>
    </footer>

    <footer class="taskbar">
      <button v-for="n in ['win', 'search', 'task']" :key="n" :aria-label="n"><svg viewBox="0 0 16 16" width="16" height="16" v-html="art[n]"></svg></button>
      <div class="apps">
        <button v-for="a in apps" :key="a.icon" :class="a.cls" :aria-label="a.label"><svg viewBox="0 0 24 24" width="24" height="24" v-html="art[a.icon]"></svg></button>
      </div>
      <div class="tray">
        <button class="people" aria-label="People"><svg viewBox="0 0 16 16" width="16" height="16" v-html="art.people"></svg></button>
        <button v-for="n in ['up', 'cloud', 'batt', 'wifi', 'vol']" :key="n" :aria-label="n"><svg viewBox="0 0 16 16" width="16" height="16" v-html="art[n]"></svg></button>
        <button class="lang">ESP</button>
        <button class="clock"><span>01:01</span><span>12/04/2020</span></button>
        <button class="notif" aria-label="Notifications"><svg viewBox="0 0 16 16" width="16" height="16" v-html="art.note"></svg><b>8</b></button>
        <i class="edge"></i>
      </div>
    </footer>
  </div>
</template>

<style>
html, body { margin: 0; background: #000; }
</style>

<style scoped>
.app { display: flex; flex-direction: column; min-height: 100vh; font: 11px/15px "Noto Sans", "Open Sans", sans-serif; color: #f2f2f2; background: #383838; overflow: hidden; }
.defs { position: absolute; }
button { background: none; border: 0; padding: 0; margin: 0; color: inherit; font: inherit; display: flex; align-items: center; justify-content: center; white-space: nowrap; }
input, select { font: inherit; color: inherit; border: 0; background: none; padding: 0; outline: 0; min-width: 0; }
svg { display: block; flex: none; overflow: visible; }
.caret { flex: none; width: 0; height: 0; border: 3px solid transparent; border-top: 4px solid #fff; border-bottom: 0; }
.caret.wide { border-width: 4px; border-top-width: 5px; border-bottom: 0; }
.caret.dim { border-top-color: #bbb; }
.caret.dark { border-top-color: #222; }
.caret.grey { border-top-color: #555; }

.top { position: relative; }
.appbtn { position: absolute; z-index: 2; left: 0; top: 0; width: 41px; height: 41px; border: 1px solid #111; background: linear-gradient(#c9c9c9, #6d6d6d); flex-wrap: wrap; gap: 0 1px; align-content: center; }
.appbtn span { width: 100%; font: bold 8px/9px "DejaVu Sans", sans-serif; color: #111; text-align: center; }
.title { display: flex; height: 24px; background: #fff; }
.qat { display: flex; margin-left: 41px; padding-left: 5px; background: linear-gradient(#a9a9a9, #767676); }
.qat button { width: 24px; }
.qat .thin { width: 12px; }
.qat .thin + button { width: 22px; }
.ws { display: flex; align-items: center; gap: 4px; width: 180px; margin-left: 2px; padding: 0 2px 0 5px; box-sizing: border-box; border: 1px solid #2f2f2f; background: linear-gradient(#666, #505050); }
.ws select { flex: 1; appearance: none; font-size: 12px; }
.qat .end { width: 17px; flex-direction: column; gap: 2px; }
.end b { width: 8px; height: 2px; background: #fff; }
h1 { flex: 1; margin: 0; font: 11px/24px "Noto Sans", sans-serif; text-align: center; color: #111; }
.info { display: flex; width: 447px; background: linear-gradient(#a9a9a9, #767676); }
.info .go { width: 14px; background: linear-gradient(#b5b5b5, #8a8a8a); }
.right { border: 4px solid transparent; border-left: 5px solid #fff; border-right: 0; }
.info input { width: 180px; box-sizing: border-box; padding-left: 3px; border: 1px solid #2c2c2c; background: #747474; font-style: italic; margin: 1px 0; }
.info input::placeholder { color: #d0d0d0; opacity: 1; }
.info button { width: 24px; }
.info .thin { width: 10px; }
.info .sign { width: 122px; padding: 0 6px 0 4px; box-sizing: border-box; justify-content: flex-start; gap: 5px; }
.sign .caret { margin-left: auto; }
.info .help { width: 44px; gap: 7px; border-left: 1px solid #999; margin-left: 4px; }
.help b { width: 15px; height: 15px; border-radius: 50%; background: #eef3fb; color: #1c4fa0; border: 1px solid #333; }
.win { display: flex; margin-left: 24px; padding-right: 1px; }
.win button { width: 46px; }

.menu { display: flex; height: 21px; padding-left: 43px; background: linear-gradient(#9d9d9d, #5f5f5f); border-top: 1px solid #333; box-sizing: border-box; border-bottom: 1px solid #2e2e2e; }
.mdi { display: flex; margin-left: auto; gap: 4px; padding-right: 2px; }
.tabs { display: flex; height: 21px; padding-left: 3px; background: #535353; box-sizing: border-box; border-bottom: 1px solid #5d9141; color: #d6d6d6; }
.tabs .on { height: 19px; margin: 2px 22px 0 0; padding-bottom: 3px; box-sizing: border-box; color: #fff; border: 1px solid #5d9141; border-bottom: 0; background: linear-gradient(#6a6a6a, #5b5b5b); }
.fold { gap: 5px; }
.fold b { width: 12px; height: 7px; border-radius: 2px; background: #f0f0f4; border: 1px solid #333; display: flex; align-items: center; justify-content: center; }
.fold b i { border: 3px solid transparent; border-bottom: 3px solid #222; border-top: 0; }

.ribbon { display: flex; height: 99px; box-sizing: border-box; padding-left: 2px; border-bottom: 1px solid #8d8d8d; background: linear-gradient(#5b5b5b, #393939 82%, #5f9345 98%); }
.panel { display: flex; flex-direction: column; box-sizing: border-box; padding-bottom: 1px; border: 1px solid #6b6b6b; border-width: 0 1px 1px 0; background: #5d5d5d; box-shadow: inset -1px 0 #3d3d3d; }
.body { display: flex; flex: 1; padding: 6px 0 0 3px; }
.big { position: relative; flex-direction: column; justify-content: flex-start; height: 72px; }
.big svg { margin-bottom: 4px; }
.big > .caret { position: absolute; right: 4px; top: 50px; }
.big.drop { padding-right: 3px; box-sizing: border-box; }
.off { color: #8a8a8a; }
.smalls { display: flex; flex-direction: column; padding-left: 7px; margin-top: -3px; }
.smalls button { height: 24px; gap: 6px; justify-content: flex-start; }
.ptitle { height: 15px; line-height: 13px; display: flex; justify-content: center; align-items: center; gap: 6px; background: linear-gradient(#505050, #333); border-bottom: 1px solid #5d9141; }

.files { display: flex; height: 29px; box-sizing: border-box; padding: 4px 0 0 20px; background: #383838; border-bottom: 4px solid #5c5c5c; }
.ftab { justify-content: flex-start; height: 21px; padding: 0 12px; box-sizing: border-box; border-radius: 8px 10px 0 0; background: #535353; color: #bdbdbd; }
.start { width: 124px; }
.ftab.on { width: 196px; background: linear-gradient(#7c7c7c, #5c5c5c); color: #fff; }
.ftab span { margin-left: auto; color: #333; font-size: 10px; }
.fplus { width: 22px; height: 15px; margin: 3px 0 0 8px; border-radius: 2px 6px 2px 6px; background: #4d4d4d; color: #c8c8c8; font-size: 14px; font-weight: bold; }

.work { display: flex; flex: 1; }
.canvas { position: relative; flex: 1; background: #000; }
.draw { position: absolute; inset: 0; width: 100%; height: 100%; overflow: hidden; }
.viewlabel { position: absolute; left: 4px; top: 6px; }
.slope { font: bold 9px "Liberation Sans Narrow", "Roboto Condensed", "Liberation Sans", sans-serif; fill: #a8d4b0; }
.callout { font: 21px "Liberation Sans Narrow", "Roboto Condensed", "Liberation Sans", sans-serif; fill: #ed1c24; }
.ucs { font: 300 18px Lato, sans-serif; fill: #fff; text-anchor: middle; }
.compass { font: bold 22px "Liberation Sans", sans-serif; fill: #a8a8a8; text-anchor: middle; }
.cube { font: bold 12px "Noto Sans", sans-serif; fill: #44464a; text-anchor: middle; }
.wcs { font: 11px "Liberation Sans", sans-serif; fill: #3f4048; }
.tip { position: absolute; left: 1352px; top: 572px; display: flex; align-items: center; height: 23px; padding: 0 9px; border: 1px solid #8a8a8a; background: #f0f2f8; color: #444; }
.tip span { margin: 0 0 4px 15px; }
.tip span:nth-of-type(1) { margin-left: 8px; }
.tip svg { margin-top: 3px; }
.cmd { position: absolute; left: 50%; bottom: 1px; width: 428px; height: 26px; transform: translateX(-50%); display: flex; align-items: center; box-sizing: border-box; border: 1px solid #4b4b4b; border-radius: 2px; background: linear-gradient(#5a5a5a, #333); color: #ccc; }
.cmd .grip { width: 6px; height: 18px; margin-left: 3px; background: radial-gradient(#aaa 1px, transparent 1px) 0 0 / 3px 3px; }
.cmd button { width: 20px; font-weight: bold; font-size: 13px; }
.cmd label { display: flex; flex: 1; align-items: center; align-self: stretch; gap: 4px; margin-left: 4px; padding: 0 4px 0 5px; background: #b0b0b0; color: #555; }
.cmd label b { font: bold 9px/13px "DejaVu Sans Mono", monospace; width: 13px; border: 1px solid #777; border-radius: 2px; background: #9fa6ad; color: #222; }
.cmd input { flex: 1; margin-left: 3px; font: italic 12px "DejaVu Sans Mono", monospace; }
.cmd input::placeholder { color: #686868; opacity: 1; }
.upc { border: 4px solid transparent; border-bottom: 5px solid #111; border-top: 0; }
.side { width: 32px; background: #5c5c5c; }
.pal { display: flex; flex-direction: column; align-items: center; width: 25px; margin-left: 4px; box-sizing: border-box; border: 1px solid #3a3a3a; background: #5a5a5a; }
.pal button { height: 22px; width: 22px; }
.pal hr { width: 19px; height: 2px; margin: 2px 0; border: 0; background: #eee; }
.dots { width: 14px; height: 4px; margin: 2px 0; background: repeating-linear-gradient(90deg, #1c1c1c 0 1px, #777 1px 2px); }

.status { display: flex; justify-content: space-between; height: 29px; background: #383838; border-top: 1px solid #555; box-sizing: border-box; }
.layouts { display: flex; gap: 2px; padding-left: 12px; }
.layouts button { width: 57px; height: 17px; border-radius: 0 0 8px 8px; background: #525252; color: #bdbdbd; }
.layouts button + button { width: 63px; }
.layouts .on { background: linear-gradient(#5c5c5c, #858585); color: #fff; font-weight: bold; }
.layouts .add.add { width: 22px; height: 15px; margin-left: 3px; font-size: 14px; font-weight: bold; }
.cells { display: flex; gap: 1px; padding-right: 1px; }
.group { display: flex; height: 26px; box-sizing: border-box; background: #535353; box-shadow: inset 0 0 0 1px #808080; }
.group button { gap: 5px; font-size: 12px; box-sizing: border-box; padding-bottom: 1px; }
.group .line { border-left: 1px solid #808080; }
.group .coord { justify-content: flex-end; padding-right: 6px; }

.taskbar { display: flex; height: 40px; background: linear-gradient(90deg, #28211b, #1f1c19 30%, #101519 50%, #1b1612 62%, #231f1b); }
.taskbar button { width: 48px; }
.apps { display: flex; gap: 1px; margin-left: 3px; }
.run { position: relative; }
.run::after { content: ""; position: absolute; left: 4px; right: 4px; bottom: 0; height: 2px; background: #76b9ed; }
.on.run { background: #4f4a46; }
.on.run::after { left: 0; right: 0; }
.tray { display: flex; margin-left: auto; color: #fff; }
.tray button { width: 24px; }
.tray .people { width: 48px; }
.tray .lang { width: 34px; font-size: 12px; }
.tray .clock { width: 72px; flex-direction: column; font-size: 12px; line-height: 18px; }
.tray .notif { width: 46px; position: relative; }
.notif b { position: absolute; left: 21px; top: 19px; width: 15px; height: 15px; line-height: 15px; border: 1px solid #888; border-radius: 50%; background: #2d2b29; }
.edge { width: 5px; border-left: 1px solid #777; }
</style>
